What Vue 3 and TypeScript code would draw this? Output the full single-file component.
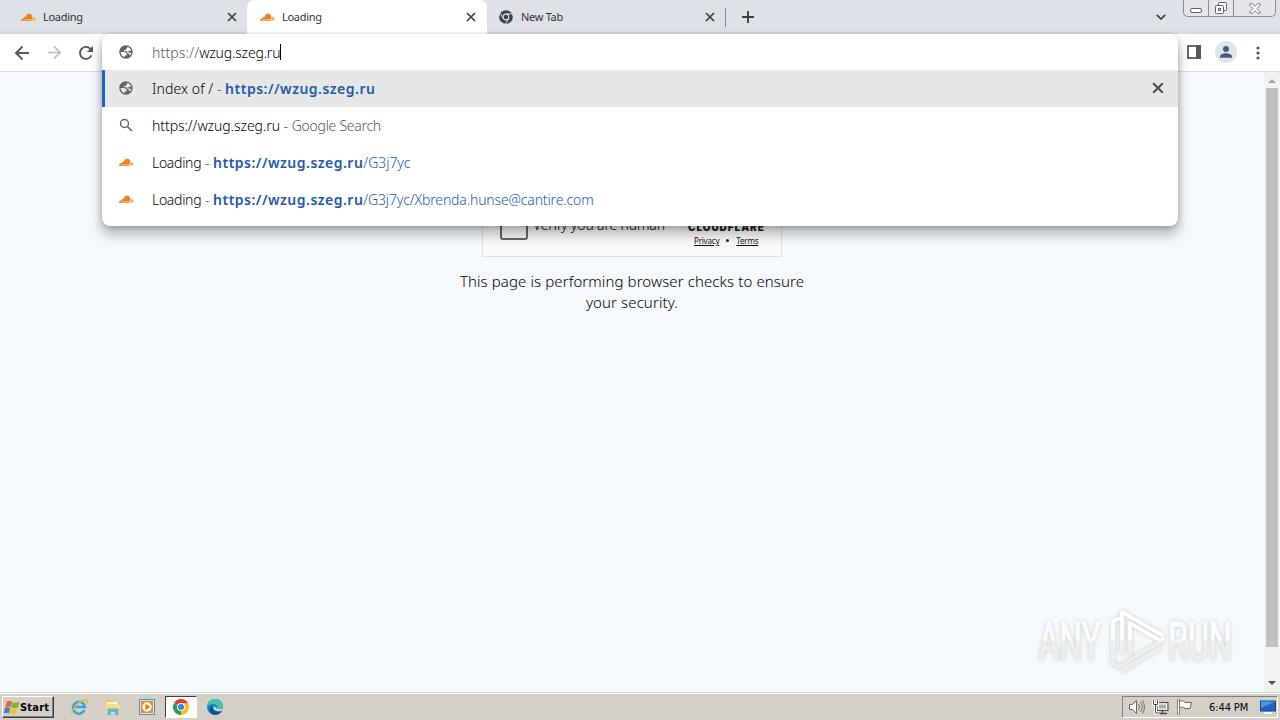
<script setup lang="ts">
interface Tab { title: string; icon: 'cloud' | 'chrome'; active: boolean }
interface Suggestion { icon: 'globe' | 'search' | 'cloud'; lead: string; sep: string; bold: string; tail: string; note: string; w: string }

const tabs: Tab[] = [
  { title: 'Loading', icon: 'cloud', active: false },
  { title: 'Loading', icon: 'cloud', active: true },
  { title: 'New Tab', icon: 'chrome', active: false },
]
const suggestions: Suggestion[] = [
  { icon: 'globe', lead: 'Index of /', sep: ' - ', bold: 'https://wzug.szeg.ru', tail: '', note: '', w: 'index' },
  { icon: 'search', lead: 'https://wzug.szeg.ru', sep: ' - ', bold: '', tail: '', note: 'Google Search', w: 'query' },
  { icon: 'cloud', lead: 'Loading', sep: ' - ', bold: 'https://wzug.szeg.ru', tail: '/G3j7yc', note: '', w: 'short' },
  { icon: 'cloud', lead: 'Loading', sep: ' - ', bold: 'https://wzug.szeg.ru', tail: '/G3j7yc/Xbrenda.hunse@cantire.com', note: '', w: 'long' },
]
</script>

<template>
  <div class="screen">
    <svg class="defs" width="0" height="0">
      <symbol id="cloud" viewBox="0 0 16 8">
        <path d="M0 8C0 6 1.400 5.200 3 5.300C3.300 4 4.300 3.600 5 4C5.500 1.500 7.200.3 9 .4C11 .5 11.800 2 12 3.500L11.300 8Z" fill="#f38020" />
        <path d="M11.700 7.800L12.500 3.800C14.600 3.700 15.900 5.700 15.800 7.800Z" fill="#faae5b" />
        <path d="M3 6.700h8.500" stroke="#fbd1a0" stroke-width=".6" />
      </symbol>
      <symbol id="globe" viewBox="0 0 24 24">
        <path fill="#5f6368" d="M12 2C6.480 2 2 6.480 2 12s4.480 10 10 10 10-4.480 10-10S17.520 2 12 2zM4 12h4.400c3.400.02 4.900 1.730 4.600 5.130H10v2.600C6.500 18.900 4 15.700 4 12zm16 0c0 2.200-.9 4.200-2.300 5.700C17.400 15 16 14 14 14v-3H9V9h3V7c1.500 0 2-.8 2-2V4.300c2.800.7 5 2.900 5.700 5.700H17c-1 0-1.500.7-1.500 1.500S16 13 17 13h2.900z" />
      </symbol>
      <symbol id="close" viewBox="0 0 10 10"><path d="M1 1l8 8M9 1l-8 8" stroke="currentColor" stroke-width="1.700" /></symbol>
    </svg>

    <header class="tabstrip">
      <div v-for="(t, i) in tabs" :key="i" class="tab" :class="{ active: t.active, last: t.icon === 'chrome' }">
        <svg v-if="t.icon === 'cloud'" class="tab-cloud"><use href="#cloud" /></svg>
        <svg v-else class="tab-chrome" viewBox="0 0 16 16">
          <circle cx="8" cy="8" r="7.800" fill="#3c4150" /><circle cx="8" cy="8" r="3.900" fill="#dfe2e8" />
          <circle cx="8" cy="8" r="2.700" fill="#3c4150" />
          <path d="M8 4.400h7M4.900 9.800L1.400 3.700M11.100 9.800L7.600 15.700" stroke="#dfe2e8" stroke-width="1.100" />
        </svg>
        <span class="tab-title">{{ t.title }}</span>
        <svg class="tab-close"><use href="#close" /></svg>
      </div>
      <i class="tab-sep"></i>
      <svg class="plus" viewBox="0 0 12 12"><path d="M6 0v12M0 6h12" stroke="#3c4043" stroke-width="1.900" /></svg>
      <span class="grow"></span>
      <svg class="chev" viewBox="0 0 10 6"><path d="M.8.8L5 5 9.200.8" fill="none" stroke="#3c4043" stroke-width="1.700" /></svg>
      <div class="winctl">
        <span class="wc wmin"><svg viewBox="0 0 13 5"><rect x=".5" y=".5" width="11" height="4" rx="1.500" fill="#fff" stroke="#596170" /></svg></span>
        <span class="wc wmax"><svg viewBox="0 0 14 14"><rect x="4.500" y="1.500" width="8" height="8" rx="1" fill="#fff" stroke="#596170" /><rect x="1.500" y="4.500" width="8" height="8" rx="1" fill="#fff" stroke="#596170" /><rect x="4.500" y="7.500" width="2" height="2" fill="none" stroke="#596170" /></svg></span>
        <span class="wc wclose"><svg viewBox="0 0 12 11"><path d="M.8.8H3.600L6 3.300 8.400.8h2.800v1.300L8 5.500l3.200 3.400v1.300H8.400L6 7.700l-2.400 2.500H.8V8.900L4 5.500.8 2.100z" fill="#fff" stroke="#697180" stroke-width=".9" /></svg></span>
      </div>
    </header>

    <div class="toolbar">
      <svg class="back" viewBox="0 0 16 16"><path d="M15 8H2M8.500 1.500L2 8l6.500 6.500" fill="none" stroke="#55585c" stroke-width="1.900" /></svg>
      <svg class="fwd" viewBox="0 0 16 16"><path d="M1 8h13M7.500 1.500L14 8l-6.500 6.500" fill="none" stroke="#babcbe" stroke-width="1.700" /></svg>
      <svg class="reload" viewBox="0 0 16 16"><path d="M13.400 10.400A6 6 0 1 1 12.300 3.700L14 5.500" fill="none" stroke="#55585c" stroke-width="1.900" /><path d="M15 .8V7H8.800z" fill="#55585c" /></svg>
      <span class="grow"></span>
      <svg class="panel" viewBox="0 0 14 14"><rect x="1" y="1" width="12" height="12" fill="#fff" stroke="#55585c" stroke-width="1.800" /><path d="M9 0h5v14H9z" fill="#55585c" /></svg>
      <svg class="avatar" viewBox="0 0 22 22"><circle cx="11" cy="11" r="11" fill="#dfe3ea" /><circle cx="11" cy="8" r="3" fill="#4c5876" /><path d="M5 16.800v-1.500c0-2 3.500-3.100 6-3.100s6 1.100 6 3.100v1.500z" fill="#4c5876" /></svg>
      <svg class="dots" viewBox="0 0 4 14"><circle cx="2" cy="2" r="1.600" /><circle cx="2" cy="7" r="1.600" /><circle cx="2" cy="12" r="1.600" /></svg>
    </div>

    <main class="page">
      <div class="content">
        <div class="widget">
          <span class="box"></span>
          <span class="verify">Verify you are human</span>
          <div class="brand"><b>CLOUDFLARE</b><div class="links"><u>Privacy</u><i></i><u>Terms</u></div></div>
        </div>
        <p class="msg"><span>This page is performing browser checks to ensure</span><br><span class="l2">your security.</span></p>
      </div>
      <div class="scroll"><i class="up"></i><div class="thumb"></div><i class="down"></i></div>
      <div class="mark">
        <svg viewBox="0 0 210 80">
          <defs>
            <linearGradient id="fade" gradientUnits="userSpaceOnUse" x1="0" y1="0" x2="0" y2="80">
              <stop offset=".5" stop-color="#fdfefe" /><stop offset=".52" stop-color="#eceeef" /><stop offset="1" stop-color="#e9ebec" />
            </linearGradient>
            <linearGradient id="fade-text" gradientUnits="userSpaceOnUse" x1="0" y1="-60" x2="0" y2="20">
              <stop offset=".5" stop-color="#fbfcfd" /><stop offset=".52" stop-color="#eceeef" /><stop offset="1" stop-color="#e9ebec" />
            </linearGradient>
          </defs>
          <g v-for="layer in ['wm-shadow', 'wm-light']" :key="layer" :class="layer">
            <text transform="translate(8.500 60) scale(.6 1)">ANY</text>
            <text transform="translate(138 60) scale(.61 1)">RUN</text>
            <path d="M90 18l-7 3v43l6 3 41-25M134 37l-3 4-31-18v32M92 54V12l41 24M91 71l40-24" />
          </g>
        </svg>
      </div>
    </main>

    <footer class="taskbar">
      <div class="start">
        <svg viewBox="0 0 16 15"><path d="M3 1.500Q5.500 0 8 1.500L6.600 7Q4 5.800 1.200 7.200z" fill="#e8632b" /><path d="M8.500 2Q11 3.500 15.500 1.800L14 7.400Q10 8.700 7.100 7.300z" fill="#78b833" /><path d="M1 7.800Q3.500 6.600 6.300 7.900L5 13.300Q2.500 12 -.3 13.300z" fill="#3b83cf" /><path d="M6.900 8.100Q10 9.500 13.700 8.200L12.300 13.500Q8.500 15 5.500 13.600z" fill="#f9c129" /></svg>
        <b>Start</b>
      </div>
      <div class="task ie"><svg viewBox="0 0 18 18"><path d="M14.400 12A5.900 5.900 0 1 1 14.800 8.900H5" fill="none" stroke="#3ba3dc" stroke-width="2.500" /><path d="M2.200 16.200C-1 13.500 11.500.4 16.300 1.900c1.300.5 1 2.400-.2 4" fill="none" stroke="#e3b93c" stroke-width="1.300" /></svg></div>
      <div class="task"><svg viewBox="0 0 18 18"><path d="M2 2h6l1 2h7v10H2z" fill="#e9c862" /><path d="M3 4h11v3H3z" fill="#fff6c8" /><path d="M1.500 6h15v9h-15z" fill="#f3dc85" /><path d="M3.500 17v-6.500h11V17H11v-3H7v3z" fill="#66b3d9" /></svg></div>
      <div class="task"><svg viewBox="0 0 18 18"><rect x="1.500" y="1.500" width="15" height="15" fill="#cde3f5" stroke="#4b91c9" /><rect x="3" y="3" width="12" height="12" fill="#f38a1d" /><circle cx="9" cy="9" r="4.700" fill="#fff" /><path d="M7.300 5.800l5 3.200-5 3.200z" fill="#ef7711" /></svg></div>
      <div class="task pressed"><svg viewBox="0 0 18 18"><path d="M9 9L2.070 5A8 8 0 0 1 15.930 5z" fill="#e33b2e" /><path d="M9 9L15.930 5A8 8 0 0 1 9 17z" fill="#fbc116" /><path d="M9 9V17A8 8 0 0 1 2.070 5z" fill="#27a149" /><path d="M9 5h7l-4 6z" fill="#fbc116" /><circle cx="9" cy="9" r="4" fill="#fff" /><circle cx="9" cy="9" r="3" fill="#3f7fea" /></svg></div>
      <div class="task edge"><svg viewBox="0 0 18 18"><circle cx="9" cy="9" r="8" fill="#1680cb" /><path d="M1 9C1 3.500 5 1 9 1c5 0 8 3.200 8 6.500 0 3-3 4.300-5.800 3.400C12 8 10 6 7.200 6 4.500 6 2 7.200 1 9z" fill="#43c5a5" /><path d="M7 7c-2 3 .5 7 6 6.500 1.500 0 2.500-.7 3-1-2 4.500-8 5.500-11 2.500C2.500 12.500 4 8.500 7 7z" fill="#0c4f99" /><path d="M8 8c-1.500 2 0 5 4 5.200 2 .1 3.500-.3 4.400-1L18 9.600c-2 2-5.500 2-7 1z" fill="#d4d0c8" /></svg></div>
      <span class="grow"></span>
      <div class="tray">
        <svg class="ti snd" viewBox="0 0 18 16"><path d="M1.500 5.500h3l4-4v13l-4-4h-3z" fill="#fff" stroke="#6c6964" /><path d="M10.500 5q2 3 0 6M12.500 3q3.500 5 0 10M14.500 1.500q4 6.500 0 13" fill="none" stroke="#77736e" /></svg>
        <svg class="ti net" viewBox="0 0 17 16"><rect x="5" y="3.500" width="11" height="8" fill="#c8c7c4" stroke="#4d4b49" /><rect x="6.500" y="5" width="8" height="5" fill="#aaa9a7" stroke="#fff" /><path d="M6 14.500h9M10.500 12v2" stroke="#4d4b49" stroke-width="1.500" /><path d="M1.500 1v4.500h4V1M3.500 6v8H8" fill="none" stroke="#fff" stroke-width="3" /><path d="M1.500 1v4.500h4V1M3.500 6v8H8" fill="none" stroke="#4d4b49" /></svg>
        <svg class="ti flag" viewBox="0 0 17 16"><path d="M3.500 2.500C6 1 7 1.500 9 3.500h6.500L14 9.500H9C7 7.500 6 8 3.500 9z" fill="#fff" stroke="#6c6964" /><path d="M1.500 1h2v14h-2z" fill="#fff" stroke="#6c6964" stroke-width=".8" /></svg>
        <span class="clock">6:44 PM</span>
        <svg class="desk" viewBox="0 0 16 14"><rect x=".5" y="1" width="15" height="10" fill="#2263bd" stroke="#12448b" /><path d="M1 1.500h14L1 8z" fill="#4c98e2" /><path d="M4 13h8" stroke="#f5f5f5" stroke-width="2" /></svg>
      </div>
    </footer>

    <section class="popup">
      <div class="row input">
        <svg class="ri"><use href="#globe" /></svg>
        <span class="url"><span class="dim">https://</span>wzug.szeg.ru</span><i class="caret"></i>
      </div>
      <div v-for="(s, i) in suggestions" :key="i" class="row" :class="[s.w, { sel: i === 0 }]">
        <svg v-if="s.icon === 'globe'" class="ri"><use href="#globe" /></svg>
        <svg v-else-if="s.icon === 'search'" class="ri" viewBox="0 0 16 16"><circle cx="6.500" cy="6.500" r="4" fill="none" stroke="#5f6368" stroke-width="1.400" /><path d="M9.400 9.500L14 14" stroke="#5f6368" stroke-width="1.600" /></svg>
        <svg v-else class="row-cloud"><use href="#cloud" /></svg>
        <span class="lead">{{ s.lead }}</span><span class="dash">{{ s.sep }}</span><b v-if="s.bold">{{ s.bold }}</b><span class="tail">{{ s.tail }}</span><span class="note">{{ s.note }}</span>
        <svg v-if="i === 0" class="row-close"><use href="#close" /></svg>
      </div>
    </section>
  </div>
</template>

<style>
body { margin: 0; overflow: hidden; }
</style>

<style scoped>
.screen { position: relative; width: 1280px; height: 720px; display: flex; flex-direction: column; overflow: hidden; font-family: "Noto Sans", "Open Sans", sans-serif; color: #000; }
.defs { position: absolute; }
svg { display: block; flex: none; }
.grow { flex: 1; }
.tabstrip { height: 34px; background: linear-gradient(#dee1e8 28px, #d6d9df); display: flex; align-items: center; flex: none; }
.tab { height: 34px; width: 239px; box-sizing: border-box; padding: 0 10px 0 21px; display: flex; align-items: center; flex: none; color: #303338; }
.tab:first-child { width: 247px; padding-right: 10px; }
.tab.active { width: 240px; padding-left: 13px; padding-right: 11px; background: #fff; border-radius: 8px 8px 0 0; }
.tab.last { padding-left: 12px; width: 238px; }
.tab-cloud { width: 15px; height: 8px; margin-right: 7px; }
.tab-chrome { width: 14px; height: 14px; margin-right: 8px; }
.tab-title { font-size: 11px; flex: 1; letter-spacing: -.3px; padding-bottom: 2px; }
.tab-close { width: 10px; height: 10px; color: #3c4043; }
.tab-sep { width: 1px; height: 19px; background: #81858e; margin-top: 1px; }
.plus { width: 12px; height: 12px; margin-left: 16px; }
.chev { width: 10px; height: 6px; margin-right: 17px; }
.winctl { display: flex; width: 93px; height: 17px; box-sizing: border-box; border: 1px solid #8a9099; border-top: 0; border-radius: 0 0 5px 5px; align-self: flex-start; margin-right: 4px; background: #e4e6eb; }
.wc { display: flex; align-items: center; justify-content: center; border-right: 1px solid #8a9099; }
.wmin { width: 24px; } .wmin svg { width: 13px; height: 5px; margin-top: 5px; }
.wmax { width: 24px; } .wmax svg { width: 14px; height: 14px; }
.wclose { flex: 1; border: 0; } .wclose svg { width: 12px; height: 11px; }
.toolbar { height: 37px; flex: none; background: #fff; border-bottom: 1px solid #dcdfe1; display: flex; align-items: center; }
.back { width: 16px; height: 16px; margin-left: 14px; }
.fwd { width: 15px; height: 15px; margin-left: 17px; }
.reload { width: 16px; height: 16px; margin-left: 16px; }
.panel { width: 14px; height: 14px; margin: 0 14px 2px 0; }
.avatar { width: 22px; height: 22px; margin: 0 19px 2px 0; }
.dots { width: 4px; height: 14px; margin-right: 20px; fill: #55585c; }
.page { flex: 1; min-height: 0; position: relative; background: #f5f9fc; display: flex; }
.content { flex: 1; display: flex; flex-direction: column; align-items: center; padding-top: 120px; }
.widget { width: 300px; height: 65px; box-sizing: border-box; border: 1px solid #e0e0e0; background: #fafafa; display: flex; align-items: flex-start; padding: 19px 15px 0 17px; }
.box { width: 24px; height: 24px; border: 2px solid #666; border-radius: 3px; }
.verify { font-size: 14px; font-weight: 300; line-height: 20px; margin: 3px 0 0 5px; color: #000; white-space: nowrap; width: 132px; letter-spacing: -.15px; }
.brand { margin: 8px -2px 0 auto; color: #222; width: 80px; }
.brand b { display: block; font: 900 10px/15px Inter, sans-serif; letter-spacing: .950px; white-space: nowrap; }
.links { display: flex; align-items: center; font-size: 8px; line-height: 11px; padding-left: 6px; color: #111; letter-spacing: -.2px; }
.links i { width: 3px; height: 3px; border-radius: 50%; background: #222; margin: 0 7px 0 7px; }
.msg { margin: 14px 0 0; text-align: center; font-size: 15px; font-weight: 300; line-height: 21px; color: #000; white-space: nowrap; letter-spacing: .1px; }
.scroll { width: 16px; background: #f1f1f1; display: flex; flex-direction: column; align-items: center; }
.up { border: 4px solid transparent; border-top: 0; border-bottom: 4px solid #a3a3a3; margin-top: 7px; }
.thumb { width: 12px; height: 559px; margin-top: 5px; background: #c1c1c1; }
.down { border: 4px solid transparent; border-bottom: 0; border-top: 4px solid #505050; margin-top: 34px; }
.mark { position: absolute; left: 1030px; top: 528px; width: 210px; height: 80px; }
.mark svg { width: 210px; height: 80px; overflow: visible; }
.mark text { font: 53px Roboto, sans-serif; stroke-width: 1; }
.mark path { fill: none; stroke-width: 4; stroke-linejoin: round; }
.wm-shadow { fill: #b2b6b9; stroke: #b2b6b9; filter: blur(2px); opacity: .7; }
.wm-light path { stroke: url(#fade); }
.wm-light text { fill: url(#fade-text); stroke: url(#fade-text); }
.taskbar { height: 28px; box-sizing: border-box; flex: none; background: #d4d0c8; box-shadow: inset 0 1px #d4d0c8, inset 0 2px #fff; display: flex; align-items: center; padding: 2px 2px 0; }
.start { width: 52px; height: 22px; box-sizing: border-box; border: 1px solid; border-color: #fff #404040 #404040 #fff; box-shadow: inset -1px -1px #808080; display: flex; align-items: center; padding-left: 1px; }
.start svg { width: 16px; height: 15px; overflow: visible; }
.start b { font: bold 11px "DejaVu Sans Condensed", "DejaVu Sans", sans-serif; color: #000; letter-spacing: .2px; }
.task { width: 32px; height: 22px; box-sizing: border-box; margin-right: 2px; display: flex; align-items: center; justify-content: center; }
.task svg { width: 18px; height: 18px; }
.task.ie { margin-left: 9px; }
.task.pressed { border: 1px solid; border-color: #404040 #fff #fff #404040; background: #fff; }
.tray { height: 22px; width: 156px; box-sizing: border-box; border: 1px solid; border-color: #808080 #fff #fff #808080; display: flex; align-items: center; padding-left: 5px; }
.ti { height: 16px; }
.snd { width: 18px; } .net { width: 17px; margin-left: 6px; } .flag { width: 17px; margin-left: 7px; }
.clock { font: 11px "DejaVu Sans Condensed", "DejaVu Sans", sans-serif; color: #000; margin-left: 16px; width: 40px; white-space: nowrap; letter-spacing: -.1px; }
.desk { width: 16px; height: 14px; margin-left: 11px; }
.popup { position: absolute; left: 102px; top: 34px; width: 1076px; height: 192px; border-radius: 8px; background: #fff; box-shadow: 0 8px 14px rgba(0,0,0,.29), 0 1px 5px rgba(0,0,0,.2); clip-path: inset(-2px -30px -30px -30px); }
.row { height: 37px; display: flex; align-items: center; padding-left: 16px; box-sizing: border-box; font-size: 14px; font-weight: 300; white-space: pre; }
.row.input { height: 36px; }
.row.sel { background: #e7e7e7; box-shadow: inset 3px 0 #1a63dc; }
.ri { width: 16px; height: 16px; margin-right: 18px; margin-bottom: 1px; }
.row-cloud { width: 15px; height: 8px; margin: 0 18px 2px 1px; }
.url { letter-spacing: -.18px; }
.url .dim { letter-spacing: .15px; }
.lead { letter-spacing: -.07px; }
.index .lead { letter-spacing: .1px; }
.short .lead, .long .lead { letter-spacing: -.3px; }
.dim, .note, .dash { color: #55585c; }
.row b, .tail { color: #2359ad; }
.row b { font-weight: 600; letter-spacing: .49px; }
.tail { letter-spacing: -.05px; }
.long .tail { letter-spacing: -.15px; }
.note { letter-spacing: -.28px; }
.caret { width: 1px; height: 16px; background: #000; }
.row-close { width: 12px; height: 12px; color: #4c4f52; margin: 0 14px 2px auto; }
</style>
